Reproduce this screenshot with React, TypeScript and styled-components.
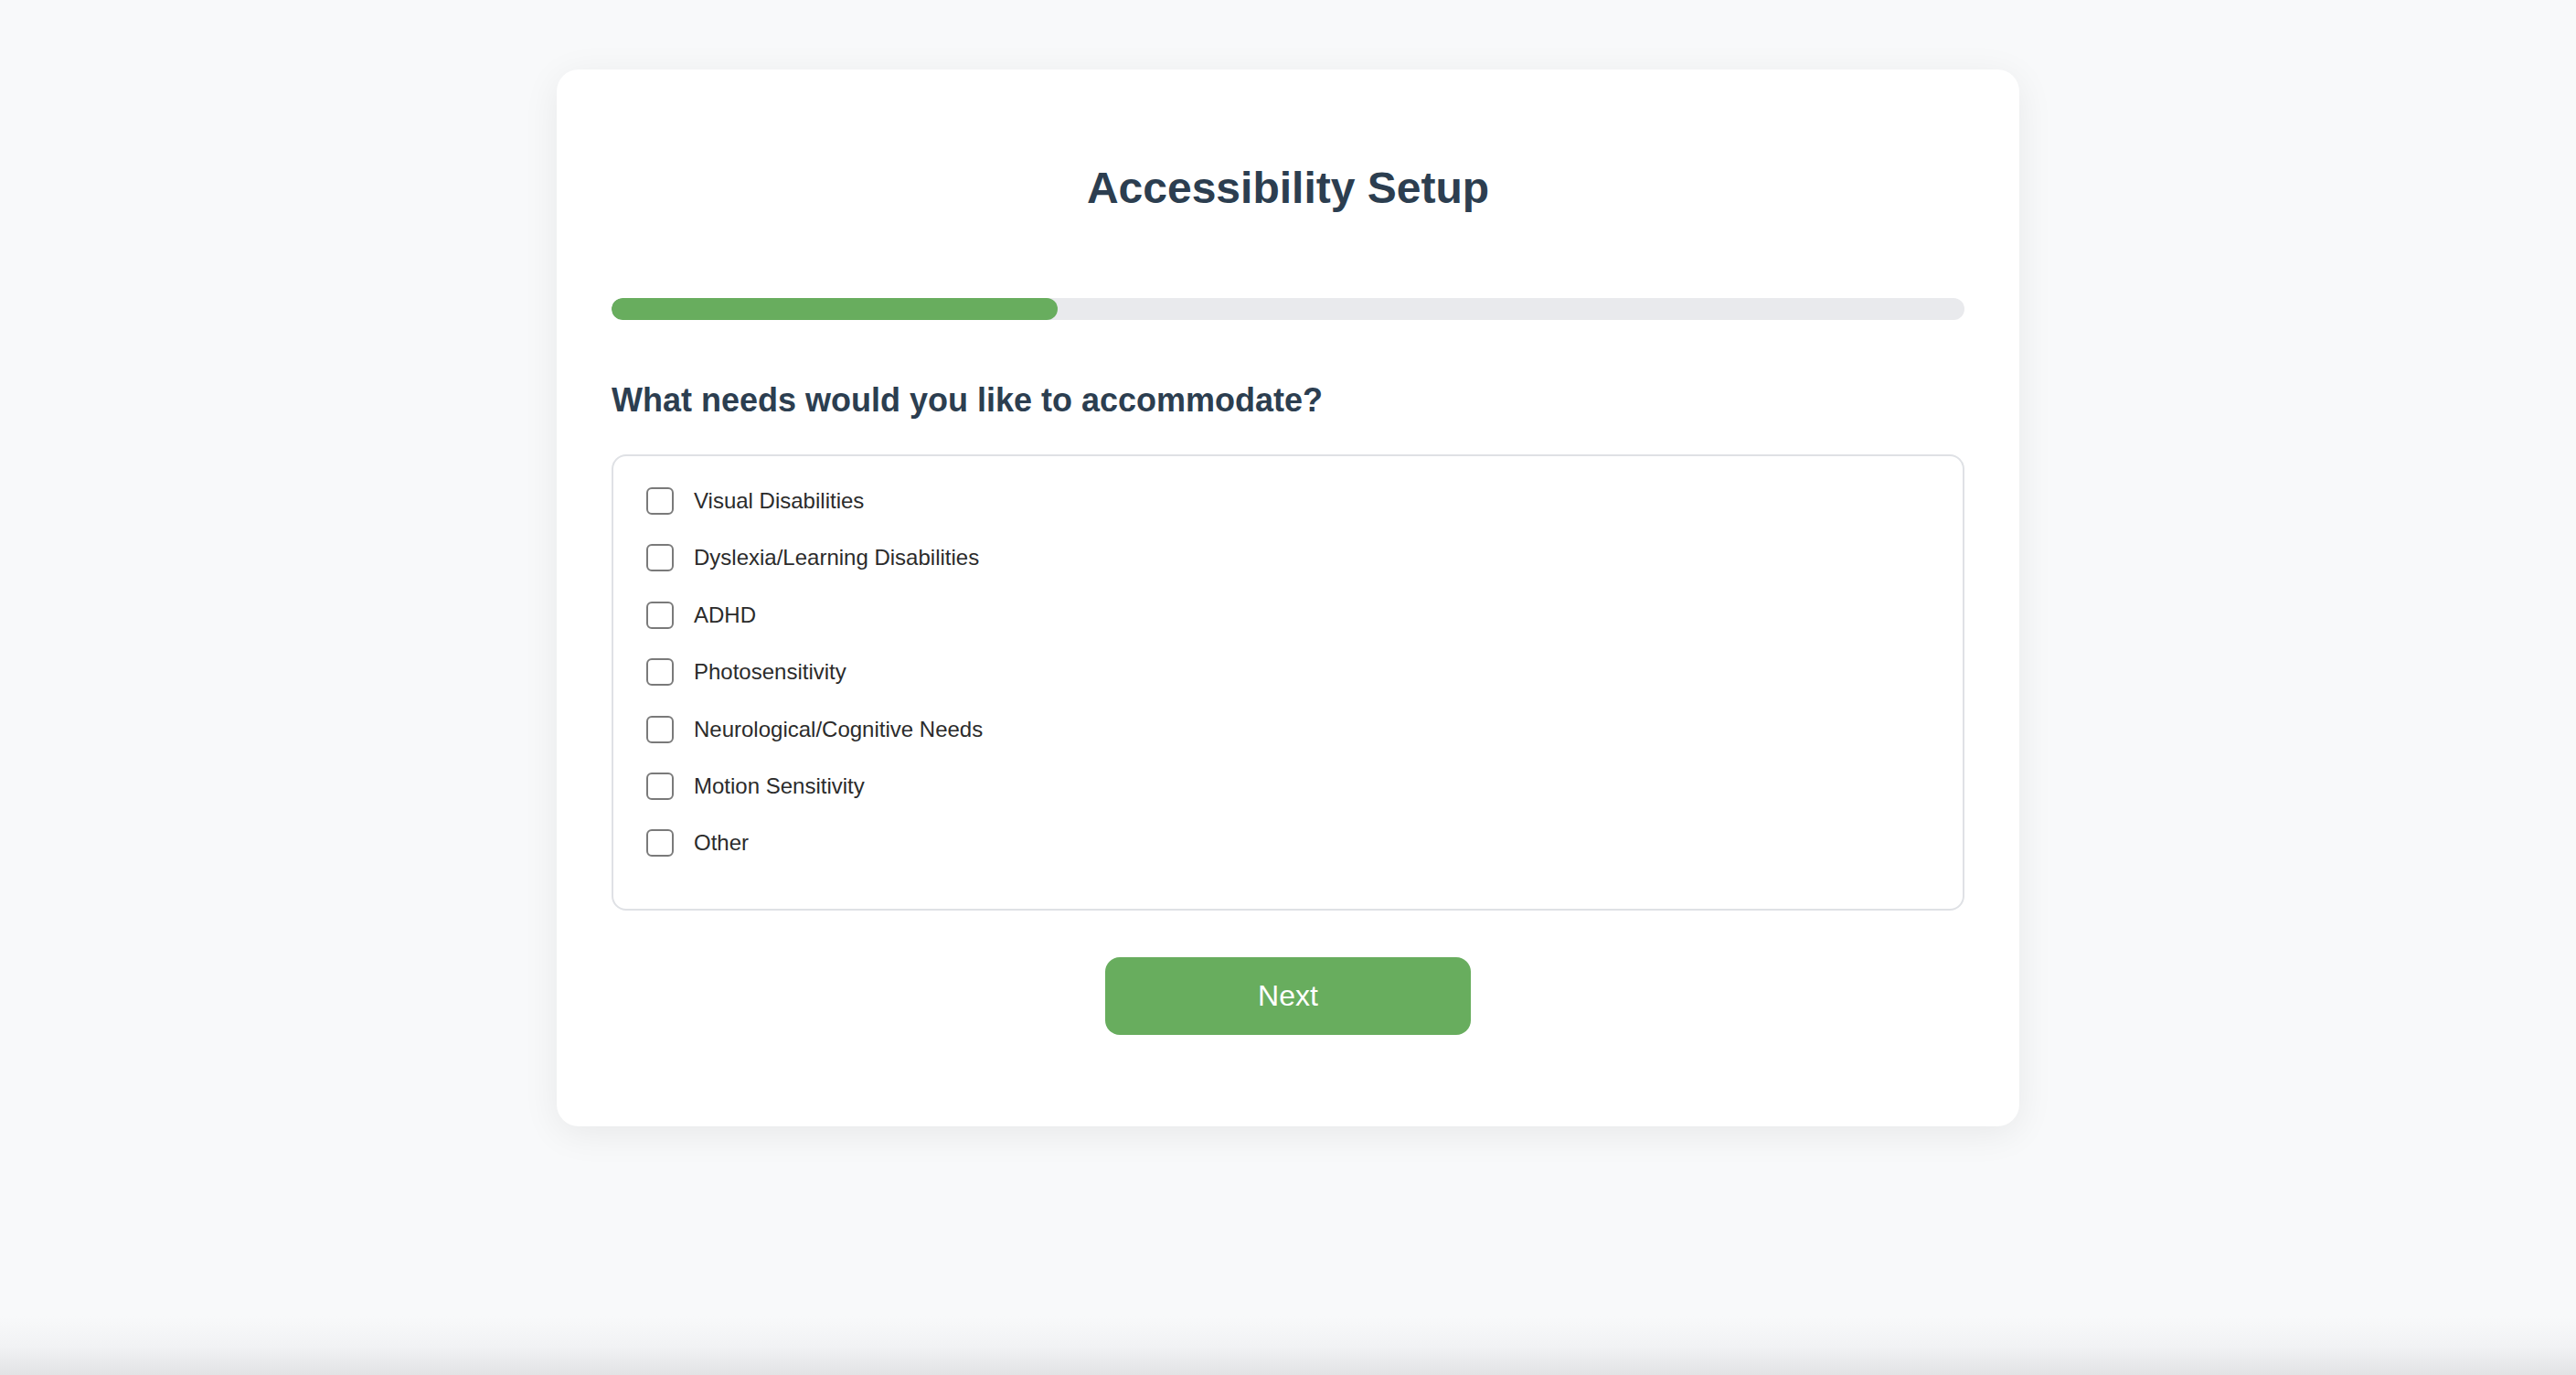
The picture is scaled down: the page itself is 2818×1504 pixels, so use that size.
import React from "react";
import styled, { createGlobalStyle } from "styled-components";

const GlobalStyle = createGlobalStyle`
  html, body {
    margin: 0;
    padding: 0;
  }
  body {
    font-family: "Liberation Sans", Arial, Helvetica, sans-serif;
    background: #f8f9fa;
  }
  * { box-sizing: border-box; }
`;

const Page = styled.div`
  min-height: 100vh;
  display: flex;
  flex-direction: column;
  align-items: center;
  padding-top: 76px;
  background: linear-gradient(
    to bottom,
    #f8f9fa 0,
    #f8f9fa calc(100% - 64px),
    #f1f2f4 calc(100% - 30px),
    #e2e3e5 100%
  );
`;

const Card = styled.main`
  width: 1600px;
  background: #ffffff;
  border-radius: 24px;
  box-shadow: 0 8px 40px rgba(0, 0, 0, 0.07);
  padding: 102px 60px 100px;
  display: flex;
  flex-direction: column;
`;

const Title = styled.h1`
  margin: 0;
  font-size: 48px;
  line-height: 56px;
  font-weight: 700;
  color: #2c3e50;
  text-align: center;
`;

const ProgressTrack = styled.div`
  margin-top: 92px;
  height: 24px;
  border-radius: 12px;
  background: #e9eaed;
  overflow: hidden;
`;

const ProgressFill = styled.div`
  height: 100%;
  border-radius: 12px;
  background: #68ad5e;
`;

const Question = styled.h2`
  margin: 67px 0 0;
  font-size: 36px;
  line-height: 42px;
  font-weight: 700;
  color: #2c3e50;
`;

const OptionsBox = styled.div`
  margin-top: 38px;
  border: 2px solid #dfe1e5;
  border-radius: 16px;
  padding: 30px 30px 53px;
  display: flex;
  flex-direction: column;
  gap: 24.4px;
`;

const OptionRow = styled.label`
  height: 38px;
  display: flex;
  align-items: center;
  gap: 22px;
  padding-left: 6px;
  font-size: 24px;
  color: #2b2b2b;
  cursor: pointer;
`;

const CheckBox = styled.input.attrs({ type: "checkbox" })`
  appearance: none;
  -webkit-appearance: none;
  margin: 0;
  width: 30px;
  height: 30px;
  border: 2.5px solid #7a7a7a;
  border-radius: 6px;
  background: #fff;
  flex-shrink: 0;
  cursor: pointer;
  &:checked {
    background: #68ad5e;
    border-color: #68ad5e;
  }
`;

const NextButton = styled.button`
  margin: 51px auto 0;
  width: 400px;
  height: 85px;
  border: none;
  border-radius: 16px;
  background: #68ad5e;
  color: #ffffff;
  font-family: "Liberation Sans", Arial, Helvetica, sans-serif;
  font-size: 32px;
  cursor: pointer;
`;

const options = [
  "Visual Disabilities",
  "Dyslexia/Learning Disabilities",
  "ADHD",
  "Photosensitivity",
  "Neurological/Cognitive Needs",
  "Motion Sensitivity",
  "Other",
];

export default function App() {
  const progress = 33;
  return (
    <>
      <GlobalStyle />
      <Page>
        <Card>
          <Title>Accessibility Setup</Title>
          <ProgressTrack>
            <ProgressFill style={{ width: `${progress}%` }} />
          </ProgressTrack>
          <Question>What needs would you like to accommodate?</Question>
          <OptionsBox>
            {options.map((o) => (
              <OptionRow key={o}>
                <CheckBox />
                <span>{o}</span>
              </OptionRow>
            ))}
          </OptionsBox>
          <NextButton>Next</NextButton>
        </Card>
      </Page>
    </>
  );
}
